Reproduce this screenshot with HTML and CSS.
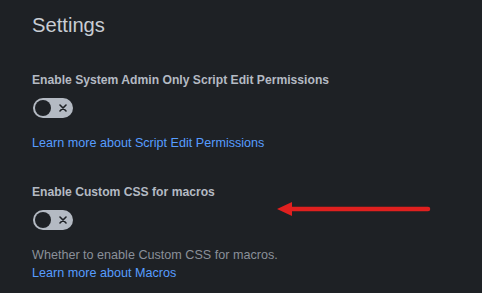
FILE: index.html
```html
<!doctype html>
<html lang="en">
<head>
  <meta charset="utf-8">
  <title>Settings</title>
  <link rel="stylesheet" href="styles.css">
</head>
<body>
<div class="page">
  <h1 class="title">Settings</h1>

  <div class="setting">
    <div class="label">Enable System Admin Only Script Edit Permissions</div>
    <span class="toggle"><span class="knob"></span><svg class="cross" viewBox="0 0 8 8"><path d="M1 1L7 7M7 1L1 7"/></svg></span>
    <div class="info">
      <a class="link" href="#">Learn more about Script Edit Permissions</a>
    </div>
  </div>

  <div class="setting">
    <div class="label">Enable Custom CSS for macros</div>
    <span class="toggle"><span class="knob"></span><svg class="cross" viewBox="0 0 8 8"><path d="M1 1L7 7M7 1L1 7"/></svg></span>
    <div class="info">
      <div class="desc">Whether to enable Custom CSS for macros.</div>
      <a class="link" href="#">Learn more about Macros</a>
    </div>
  </div>

  <!-- annotation arrow drawn over the screenshot -->
  <svg class="arrow" width="158" height="18" viewBox="0 0 158 18">
    <line x1="14" y1="9" x2="152" y2="9" />
    <polygon points="1,9 16,2 16,16" />
  </svg>
</div>
</body>
</html>
```

FILE: styles.css
```css
body {
  margin: 0;
  background-color: #1e2125;
  font-family: "Liberation Sans", Arial, sans-serif;
}

.page {
  position: relative;
  padding: 13px 32px 0 32px;
}

.title {
  margin: 0;
  font-size: 20.2px;
  line-height: 24px;
  font-weight: normal;
  color: #c8cdd4;
}

.setting {
  display: flex;
  flex-direction: column;
  align-items: flex-start;
  margin-top: 35px;
}

.setting + .setting {
  margin-top: 32px;
}

.label {
  font-size: 12.15px;
  line-height: 16px;
  font-weight: bold;
  color: #b4bac3;
}

.toggle {
  position: relative;
  display: flex;
  align-items: center;
  margin: 10px 0 0 1px;
  width: 40px;
  height: 20px;
  border-radius: 10px;
  background-color: #b4bac3;
}

.knob {
  position: absolute;
  left: 2px;
  top: 2px;
  width: 16px;
  height: 16px;
  border-radius: 50%;
  background-color: #1e2125;
}

.cross {
  margin-left: 26px;
  width: 8px;
  height: 8px;
}

.cross path {
  stroke: #1e2125;
  stroke-width: 1.6;
  stroke-linecap: round;
  fill: none;
}

.info {
  margin-top: 16px;
  font-size: 12.6px;
  line-height: 18px;
}

.desc {
  color: #8a9099;
}

.link {
  color: #579dff;
  text-decoration: none;
}

.arrow {
  position: absolute;
  left: 276px;
  top: 200px;
}

.arrow line {
  stroke: #e0201f;
  stroke-width: 4.5;
  stroke-linecap: round;
}

.arrow polygon {
  fill: #e0201f;
}
```
